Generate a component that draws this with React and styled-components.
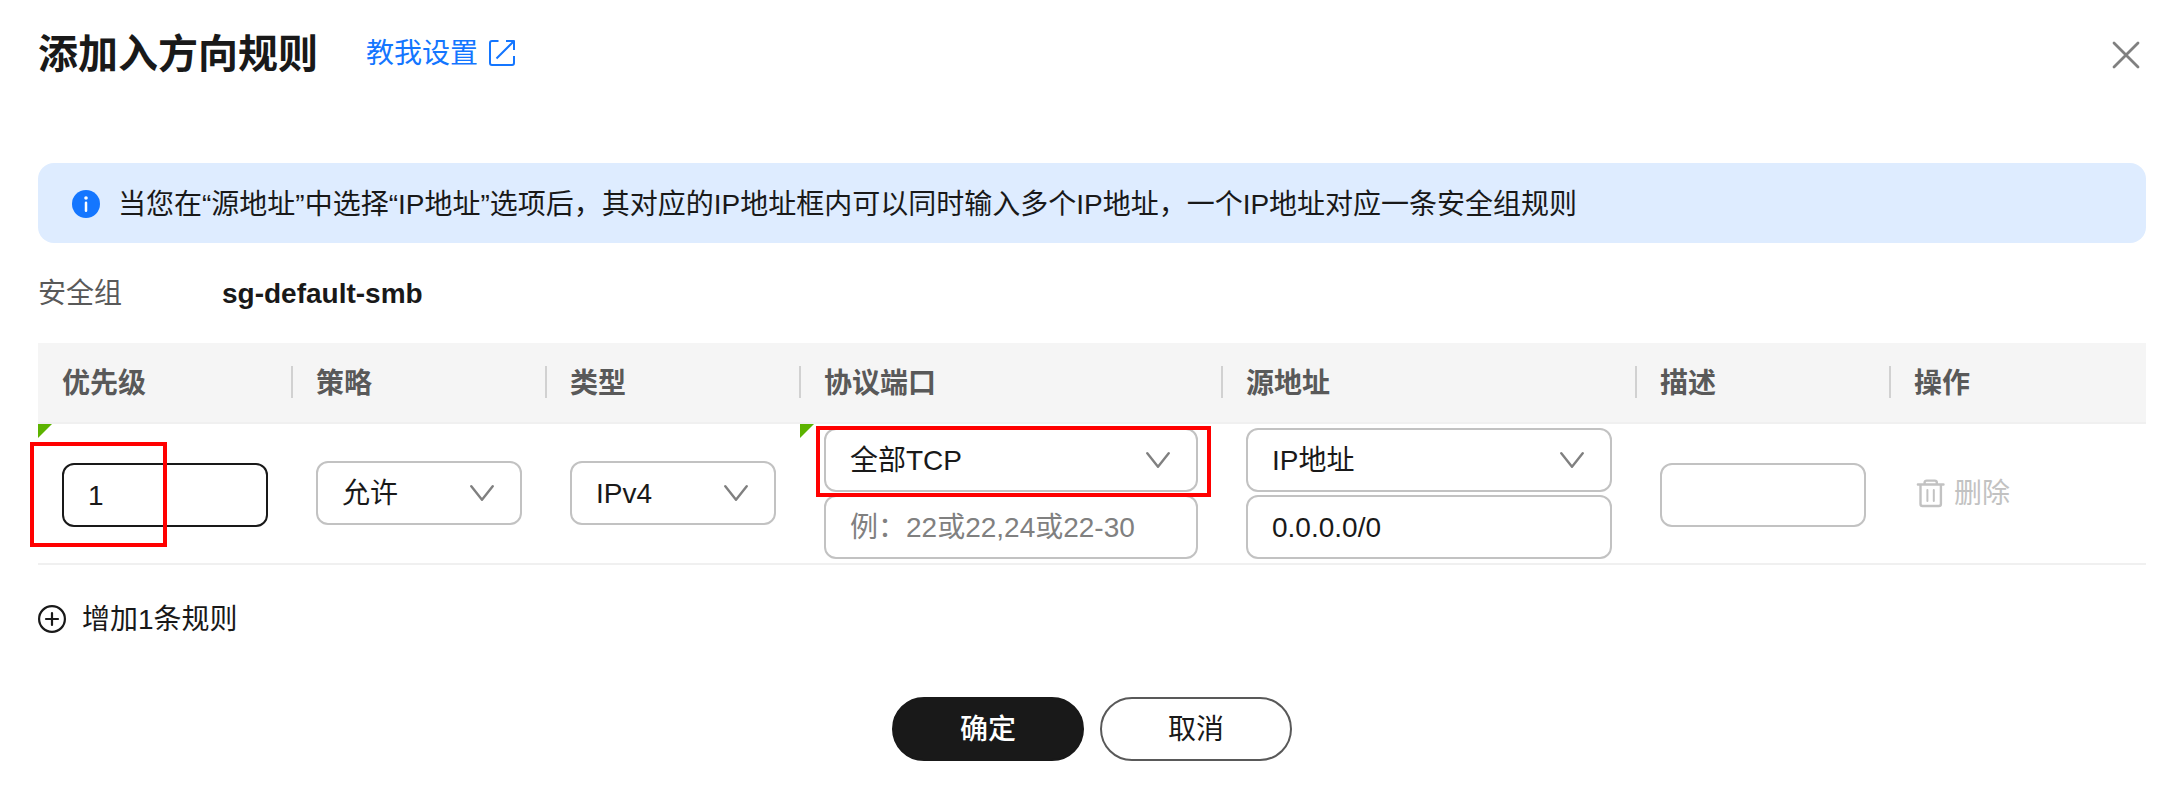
import React from "react";
import styled, { createGlobalStyle } from "styled-components";

const GlobalStyle = createGlobalStyle`
  * { box-sizing: border-box; }
  body {
    margin: 0;
    background: #fff;
    color: #191919;
    font-family: "Liberation Sans", "Noto Sans CJK SC", sans-serif;
    font-size: 28px;
    line-height: 40px;
  }
`;

const Dialog = styled.main`
  width: 2168px;
  height: 792px;
  padding: 0 22px 0 38px;
  overflow: hidden;
  display: flex;
  flex-direction: column;
`;

const Header = styled.header`
  height: 163px;
  padding: 23px 5px 0 0;
  display: flex;
  align-items: flex-start;
`;

const Title = styled.h1`
  margin: 0;
  font-size: 40px;
  line-height: 62px;
  font-weight: 600;
  white-space: nowrap;
`;

const Label = styled.span`
  padding-top: 2px;
  white-space: nowrap;
`;

const HelpLink = styled.a`
  display: flex;
  align-items: center;
  gap: 10px;
  height: 60px;
  margin-left: 48px;
  color: #1476ff;
`;

const CloseButton = styled.button`
  margin: 17px 0 0 auto;
  padding: 0;
  border: 0;
  background: none;
  display: flex;
`;

const Alert = styled.section`
  height: 80px;
  padding: 2px 34px 0;
  border-radius: 16px;
  background: #deecff;
  display: flex;
  align-items: center;
  gap: 18px;
`;

const GroupField = styled.div`
  height: 100px;
  display: flex;
  align-items: center;
`;

const GroupLabel = styled(Label)`
  width: 184px;
  color: #595959;
`;

const GroupName = styled(Label)`
  font-weight: 700;
`;

const Row = styled.div`
  display: grid;
  grid-template-columns: 254px 254px 254px 422px 414px 254px 256px;
  border-bottom: 2px solid #f0f0f0;
`;

const HeadRow = styled(Row)`
  height: 81px;
  background: #f5f5f5;
  color: #595959;
  font-weight: 600;
`;

const HeadCell = styled.div`
  position: relative;
  padding: 0 24px;
  display: flex;
  align-items: center;

  & + &::before {
    content: "";
    position: absolute;
    left: -1px;
    top: 23px;
    width: 2px;
    height: 32px;
    background: #d1d1d1;
  }
`;

const BodyRow = styled(Row)`
  height: 141px;
`;

const cellPadding = {
  input: "3px 24px 0",
  select: "0 24px 1px",
  stack: "0 24px",
};

const Cell = styled.div`
  position: relative;
  padding: ${(p) => cellPadding[p.$kind]};
  display: flex;
  flex-direction: column;
  justify-content: center;
  gap: 3px;
`;

const EditedMark = styled.i`
  position: absolute;
  left: 0;
  top: 0;
  border-top: 14px solid #5cb300;
  border-right: 14px solid transparent;
`;

const Field = styled.div`
  height: 64px;
  padding: 0 26px 0 24px;
  border: 2px solid ${(p) => (p.$active ? "#191919" : "#c2c2c2")};
  border-radius: 12px;
  display: flex;
  align-items: center;
  justify-content: space-between;
  color: ${(p) => (p.$placeholder ? "#808080" : "#191919")};
`;

const Highlight = styled.div`
  position: absolute;
  left: ${(p) => p.$left}px;
  top: ${(p) => p.$top}px;
  width: ${(p) => p.$width}px;
  height: ${(p) => p.$height}px;
  border: 4px solid #f00;
  pointer-events: none;
`;

const DeleteAction = styled.div`
  display: flex;
  align-items: center;
  gap: 8px;
  padding-left: 2px;
  color: #c2c2c2;
`;

const AddRule = styled.div`
  height: 108px;
  display: flex;
  align-items: center;
  gap: 16px;
`;

const Footer = styled.footer`
  margin-top: 24px;
  display: flex;
  justify-content: center;
  gap: 16px;
`;

const Button = styled.button`
  width: 192px;
  height: 64px;
  padding: 2px 0 0;
  border: 2px solid ${(p) => (p.$primary ? "#191919" : "#595959")};
  border-radius: 32px;
  background: ${(p) => (p.$primary ? "#191919" : "#fff")};
  color: ${(p) => (p.$primary ? "#fff" : "#191919")};
  font: inherit;
  font-weight: ${(p) => (p.$primary ? 500 : 400)};
`;

const ExternalIcon = () => (
  <svg width="28" height="28" viewBox="0 0 28 28" fill="none" stroke="currentColor" strokeWidth="2" strokeLinecap="butt" strokeLinejoin="round">
    <path d="M10.500 2H4a2 2 0 0 0-2 2v20a2 2 0 0 0 2 2h20a2 2 0 0 0 2-2v-7M18 2h8v9M26 2 8.500 19.500" />
  </svg>
);

const CloseIcon = () => (
  <svg width="30" height="30" viewBox="0 0 30 30" fill="none" stroke="#808080" strokeWidth="2.800" strokeLinecap="round">
    <path d="M3 3l24 24M27 3 3 27" />
  </svg>
);

const InfoIcon = () => (
  <svg width="28" height="28" viewBox="0 0 28 28">
    <circle cx="14" cy="14" r="14" fill="#1476ff" />
    <circle cx="14" cy="8" r="1.800" fill="#fff" />
    <path d="M14 12.700v8" stroke="#fff" strokeWidth="2.500" strokeLinecap="round" />
  </svg>
);

const ChevronIcon = () => (
  <svg width="24" height="17" viewBox="0 0 24 17" fill="none" stroke="#808080" strokeWidth="2.400" strokeLinecap="round" strokeLinejoin="round">
    <path d="M1.300 1.300 12 14.800 22.700 1.300" />
  </svg>
);

const TrashIcon = () => (
  <svg width="30" height="30" viewBox="0 0 30 30" fill="none" stroke="currentColor" strokeWidth="2.400" strokeLinecap="round" strokeLinejoin="round">
    <path d="M1.900 6.500h25.600M4.500 7v19a2 2 0 0 0 2 2h16.400a2 2 0 0 0 2-2V7M8.600 6V4.600a2 2 0 0 1 2-2h8.200a2 2 0 0 1 2 2V6" />
    <path d="M11.400 12v11M17.800 12v11" strokeWidth="2" />
  </svg>
);

const PlusCircleIcon = () => (
  <svg width="28" height="28" viewBox="0 0 28 28" fill="none" stroke="#191919" strokeWidth="2.200" strokeLinecap="round">
    <circle cx="14" cy="14" r="12.900" />
    <path d="M14 8v12M8 14h12" />
  </svg>
);

const columns = ["优先级", "策略", "类型", "协议端口", "源地址", "描述", "操作"];

const Select = ({ children }) => (
  <Field>
    <Label>{children}</Label>
    <ChevronIcon />
  </Field>
);

export default function App() {
  return (
    <>
      <GlobalStyle />
      <Dialog>
        <Header>
          <Title>添加入方向规则</Title>
          <HelpLink>
            <Label>教我设置</Label>
            <ExternalIcon />
          </HelpLink>
          <CloseButton aria-label="关闭">
            <CloseIcon />
          </CloseButton>
        </Header>

        <Alert>
          <InfoIcon />
          <Label>当您在“源地址”中选择“IP地址”选项后，其对应的IP地址框内可以同时输入多个IP地址，一个IP地址对应一条安全组规则</Label>
        </Alert>

        <GroupField>
          <GroupLabel>安全组</GroupLabel>
          <GroupName>sg-default-smb</GroupName>
        </GroupField>

        <HeadRow>
          {columns.map((name) => (
            <HeadCell key={name}>
              <Label>{name}</Label>
            </HeadCell>
          ))}
        </HeadRow>
        <BodyRow>
          <Cell $kind="input">
            <EditedMark />
            <Field $active>
              <Label>1</Label>
            </Field>
            <Highlight $left={-8} $top={18} $width={137} $height={105} />
          </Cell>
          <Cell $kind="select">
            <Select>允许</Select>
          </Cell>
          <Cell $kind="select">
            <Select>IPv4</Select>
          </Cell>
          <Cell $kind="stack">
            <EditedMark />
            <Select>全部TCP</Select>
            <Field $placeholder>
              <Label>例：22或22,24或22-30</Label>
            </Field>
            <Highlight $left={16} $top={2} $width={395} $height={71} />
          </Cell>
          <Cell $kind="stack">
            <Select>IP地址</Select>
            <Field>
              <Label>0.0.0.0/0</Label>
            </Field>
          </Cell>
          <Cell $kind="input">
            <Field />
          </Cell>
          <Cell $kind="select">
            <DeleteAction>
              <TrashIcon />
              <Label>删除</Label>
            </DeleteAction>
          </Cell>
        </BodyRow>

        <AddRule>
          <PlusCircleIcon />
          <Label>增加1条规则</Label>
        </AddRule>

        <Footer>
          <Button $primary>确定</Button>
          <Button>取消</Button>
        </Footer>
      </Dialog>
    </>
  );
}
